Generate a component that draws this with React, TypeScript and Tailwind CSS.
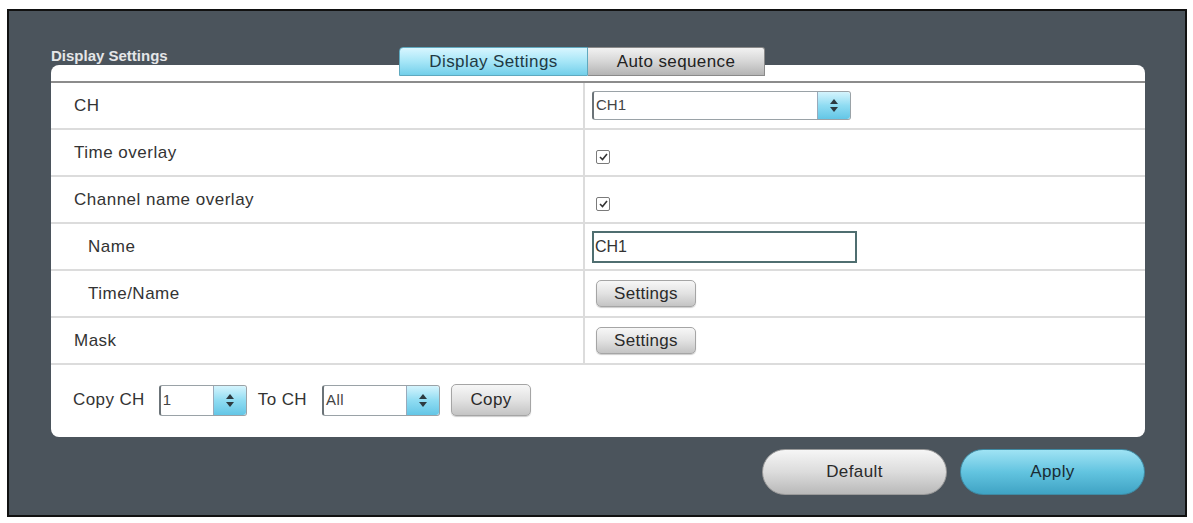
import React from 'react';

const font = { fontFamily: '"Liberation Sans", Arial, sans-serif' };

function Spinner() {
  return (
    <div className="flex h-full w-[33px] flex-col items-center justify-center gap-[3px] rounded-r-[3px] border-l border-[#9ab] bg-gradient-to-b from-[#d4f4fd] via-[#8fdcf2] to-[#63c6e6]">
      <svg width="8" height="5" viewBox="0 0 8 5">
        <path d="M4 0 L8 5 L0 5 Z" fill="#2d3a40" />
      </svg>
      <svg width="8" height="5" viewBox="0 0 8 5">
        <path d="M0 0 L8 0 L4 5 Z" fill="#2d3a40" />
      </svg>
    </div>
  );
}

function Select({ value, width, height }: { value: string; width: string; height: string }) {
  return (
    <div
      className={`flex ${width} ${height} items-stretch rounded-[3px] border border-[#9aa2a7] border-l-2 border-l-[#6b7378] bg-white`}
    >
      <span className="flex flex-1 items-center pl-[2px] text-[15px] text-[#444]">{value}</span>
      <Spinner />
    </div>
  );
}

function GrayButton({ label, width, height }: { label: string; width: string; height: string }) {
  return (
    <button
      className={`${width} ${height} rounded-[5px] border border-[#a5a5a5] bg-gradient-to-b from-[#f7f7f7] via-[#e2e2e2] to-[#c4c4c4] text-[17px] tracking-[0.3px] text-[#2a2a2a] shadow-[0_1px_1px_rgba(0,0,0,0.2)]`}
    >
      {label}
    </button>
  );
}

function Checkbox() {
  return (
    <div className="flex h-[14px] w-[14px] items-center justify-center rounded-[2px] border border-[#7a7a7a] bg-white">
      <svg width="9" height="8" viewBox="0 0 9 8">
        <path d="M1 4 L3.5 6.5 L8 1" fill="none" stroke="#333" strokeWidth="1.6" />
      </svg>
    </div>
  );
}

function Row({ label, indent, children }: { label: string; indent?: boolean; children: React.ReactNode }) {
  return (
    <div className="flex h-[47px] border-b-2 border-[#dcdcdc]">
      <div
        className={`flex w-[534px] items-center border-r-2 border-[#dcdcdc] text-[17px] tracking-[0.5px] text-[#333] ${indent ? 'pl-[37px]' : 'pl-[23px]'}`}
      >
        {label}
      </div>
      <div className="flex flex-1 items-center pl-[7px]">{children}</div>
    </div>
  );
}

export default function App() {
  return (
    <div className="h-[523px] w-[1193px] bg-white pl-[7px] pt-[9px]" style={font}>
      <div className="flex h-[508px] w-[1180px] flex-col border-2 border-[#111] bg-[#4b545c] pl-[42px] pr-[40px]">
        <div className="flex h-[54px] items-start pt-[34px]">
          <span className="text-[15px] font-bold text-[#e4e6e8]">Display Settings</span>
        </div>

        <div className="relative h-[372px] rounded-[8px] bg-white">
          <div className="absolute left-[348px] top-[-18px] flex h-[29px]">
            <div className="flex w-[189px] items-center justify-center rounded-tl-[4px] border border-[#5fa9bf] bg-gradient-to-b from-[#d8f6ff] via-[#a6e6f7] to-[#72cfea] text-[17px] tracking-[0.4px] text-[#1f3a44]">
              Display Settings
            </div>
            <div className="flex w-[177px] items-center justify-center rounded-tr-[3px] border border-l-0 border-[#8a8a8a] bg-gradient-to-b from-[#f2f2f2] via-[#d6d6d6] to-[#b4b4b4] text-[17px] tracking-[0.4px] text-[#222]">
              Auto sequence
            </div>
          </div>

          <div className="h-[18px] border-b-2 border-[#8c8c8c]" />

          <div className="flex flex-col">
            <Row label="CH">
              <Select value="CH1" width="w-[259px]" height="h-[29px]" />
            </Row>
            <Row label="Time overlay">
              <div className="pl-[4px] pt-[8px]">
                <Checkbox />
              </div>
            </Row>
            <Row label="Channel name overlay">
              <div className="pl-[4px] pt-[8px]">
                <Checkbox />
              </div>
            </Row>
            <Row label="Name" indent>
              <div className="flex h-[32px] w-[265px] items-center border-2 border-[#4f6e70] bg-white pl-[1px] text-[16px] text-[#333]">
                CH1
              </div>
            </Row>
            <Row label="Time/Name" indent>
              <div className="pl-[4px]">
                <GrayButton label="Settings" width="w-[100px]" height="h-[27px]" />
              </div>
            </Row>
            <Row label="Mask">
              <div className="pl-[4px]">
                <GrayButton label="Settings" width="w-[100px]" height="h-[27px]" />
              </div>
            </Row>
            <div className="flex h-[70px] items-center pl-[22px] text-[17px] tracking-[0.4px] text-[#333]">
              <span className="mr-[14px]">Copy CH</span>
              <Select value="1" width="w-[88px]" height="h-[31px]" />
              <span className="ml-[11px] mr-[15px]">To CH</span>
              <Select value="All" width="w-[118px]" height="h-[31px]" />
              <div className="ml-[11px]">
                <GrayButton label="Copy" width="w-[80px]" height="h-[32px]" />
              </div>
            </div>
          </div>
        </div>

        <div className="flex justify-end gap-[13px] pt-[12px]">
          <button className="h-[46px] w-[185px] rounded-full border border-[#9a9a9a] bg-gradient-to-b from-[#f6f6f6] via-[#dcdcdc] to-[#b9b9b9] text-[17px] tracking-[0.4px] text-[#2a2a2a]">
            Default
          </button>
          <button className="h-[46px] w-[185px] rounded-full border border-[#3f8aa3] bg-gradient-to-b from-[#9fe3f4] via-[#62c4e0] to-[#3fa3c4] text-[17px] tracking-[0.4px] text-[#1a2c33]">
            Apply
          </button>
        </div>
      </div>
    </div>
  );
}
